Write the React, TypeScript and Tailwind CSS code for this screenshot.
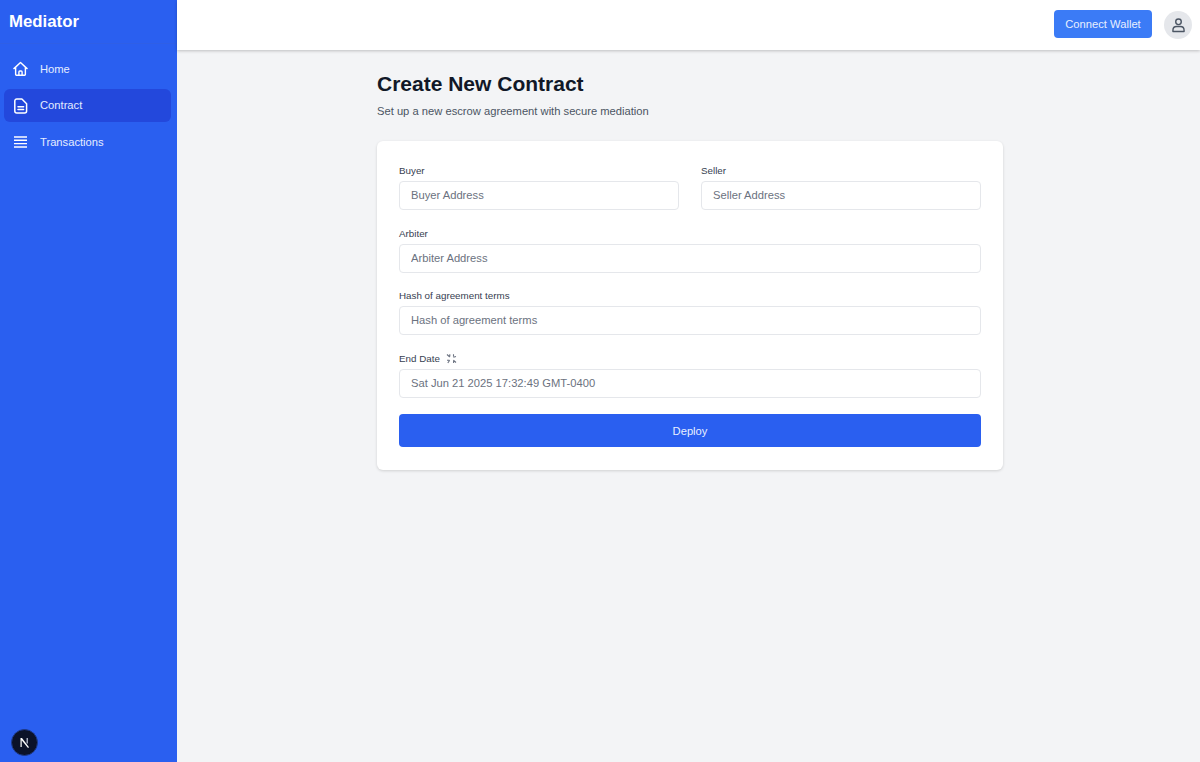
function Field({ label, placeholder, icon }: { label: string; placeholder: string; icon?: boolean }) {
  return (
    <div className="flex flex-col">
      <label className="mb-[3px] flex h-[15px] items-center gap-[6px] text-[9.8px] leading-[15px] text-[#374151]">
        {label}
        {icon ? <LoadingIcon /> : null}
      </label>
      <input
        readOnly
        placeholder={placeholder}
        className="h-[29px] w-full rounded-[4px] border border-[#e5e7eb] bg-white px-[11px] pb-[1px] text-[11.2px] outline-none placeholder:text-[#6b7280]"
      />
    </div>
  );
}

function LoadingIcon() {
  return (
    <svg width="11" height="11" viewBox="0 0 11 11" fill="none" stroke="#6b7280" strokeWidth="1.1">
      <path d="M1 1.5 3.8 4M3.8 1.2v2.3M10 3.5 7.4 4.2M7.5 1.2v2.4M1 7.2h2.6M3.7 7.3 1.8 10M7.4 7.2 10 9.5M7.6 7.4V10" />
    </svg>
  );
}

function HomeIcon() {
  return (
    <svg width="16" height="16" viewBox="0 0 16 16" fill="none" stroke="white" strokeWidth="1.5" strokeLinejoin="round" strokeLinecap="round">
      <path d="M1 7.6 8 1l7 6.6M2.8 6.2v7.3a1.2 1.2 0 0 0 1.2 1.2h8a1.2 1.2 0 0 0 1.2-1.2V6.2" />
      <path d="M6.3 14.6v-3.4a1 1 0 0 1 1-1h1.4a1 1 0 0 1 1 1v3.4" />
    </svg>
  );
}

function DocIcon() {
  return (
    <svg width="14" height="16" viewBox="0 0 14 16" fill="none" stroke="white" strokeWidth="1.5" strokeLinejoin="round" strokeLinecap="round">
      <path d="M2.8 1h5.1L12.6 5.7v7.4a2 2 0 0 1-2 2H2.8a2 2 0 0 1-2-2V3a2 2 0 0 1 2-2Z" />
      <path d="M4 8.7h5.6M4 11.6h5.6" />
    </svg>
  );
}

function BarsIcon() {
  return (
    <svg width="13" height="12" viewBox="0 0 13 12" fill="none" stroke="white" strokeWidth="1.4">
      <path d="M0 1h13M0 4.3h13M0 7.6h13M0 11h13" />
    </svg>
  );
}

function UserIcon() {
  return (
    <svg width="13" height="15" viewBox="0 0 14 16" fill="none" stroke="#4b5563" strokeWidth="1.5" strokeLinejoin="round">
      <circle cx="7" cy="4" r="3" />
      <path d="M1 13c0-2.6 1.8-4 4-4h4c2.2 0 4 1.4 4 4v1.5H1Z" />
    </svg>
  );
}

function NextLogo() {
  return (
    <svg width="13" height="13" viewBox="0 0 13 13" fill="none">
      <path d="M2.5 2v9h1.2V4.2L10 12l1-.8L4 2Z" fill="white" />
      <rect x="8.6" y="2" width="1.2" height="5.5" fill="#c7cede" />
    </svg>
  );
}

export default function App() {
  return (
    <div className="flex h-[762px] w-[1200px] overflow-hidden bg-[#f3f4f6] font-['Liberation_Sans',Arial,sans-serif]">
      <aside className="flex w-[177px] shrink-0 flex-col bg-[#2a5ff0] text-white">
        <div className="flex h-[44px] items-center border-b border-[#2f5fe6] pl-[9px] text-[16.8px] font-bold">Mediator</div>
        <nav className="flex flex-col gap-[3.5px] pl-[4px] pr-[6px] pt-[8.5px]">
          <a className="flex h-[33px] items-center gap-[12px] rounded-[6px] pl-[9px] text-[11.2px] text-[#e5edff]">
            <span className="flex w-[15px] justify-center"><HomeIcon /></span>
            Home
          </a>
          <a className="flex h-[33px] items-center gap-[12px] rounded-[6px] bg-[#2348dc] pl-[9px] text-[11.2px] text-[#e5edff]">
            <span className="flex w-[15px] justify-center"><DocIcon /></span>
            Contract
          </a>
          <a className="flex h-[33px] items-center gap-[12px] rounded-[6px] pl-[9px] text-[11.2px] text-[#e5edff]">
            <span className="flex w-[15px] justify-center"><BarsIcon /></span>
            Transactions
          </a>
        </nav>
        <div className="mt-auto pb-[6px] pl-[11px]">
          <div className="flex h-[27px] w-[27px] items-center justify-center rounded-full border border-[#1e3a8a] bg-[#0b1229]">
            <NextLogo />
          </div>
        </div>
      </aside>
      <div className="flex min-w-0 flex-1 flex-col">
        <header className="flex h-[50px] shrink-0 items-start justify-end bg-white pr-[8px] pt-[10px] shadow-[0_1px_3px_rgba(0,0,0,0.22)]">
          <button className="h-[28px] w-[98px] rounded-[4px] bg-[#3b7bf6] text-[11.2px] text-[#e8efff]">Connect Wallet</button>
          <div className="ml-[12px] mt-[1px] flex h-[28px] w-[28px] items-center justify-center rounded-full bg-[#e5e7eb]">
            <UserIcon />
          </div>
        </header>
        <main className="ml-[200px] w-[626px] pt-[22px]">
          <h1 className="text-[21px] font-bold leading-[24px] text-[#111827]">Create New Contract</h1>
          <p className="mt-[6px] text-[11.2px] leading-[18px] text-[#4b5563]">Set up a new escrow agreement with secure mediation</p>
          <section className="mt-[21px] rounded-[6px] bg-white px-[22px] pb-[23px] pt-[22px] shadow-[0_1px_3px_rgba(0,0,0,0.15)]">
            <div className="flex flex-col gap-[15.5px]">
              <div className="grid grid-cols-2 gap-[22px]">
                <Field label="Buyer" placeholder="Buyer Address" />
                <Field label="Seller" placeholder="Seller Address" />
              </div>
              <Field label="Arbiter" placeholder="Arbiter Address" />
              <Field label="Hash of agreement terms" placeholder="Hash of agreement terms" />
              <Field label="End Date" placeholder="Sat Jun 21 2025 17:32:49 GMT-0400" icon />
            </div>
            <button className="mt-[16.5px] h-[33px] w-full rounded-[4px] bg-[#2a5ff0] pt-[1px] text-[11.2px] text-[#e8efff]">Deploy</button>
          </section>
        </main>
      </div>
    </div>
  );
}
